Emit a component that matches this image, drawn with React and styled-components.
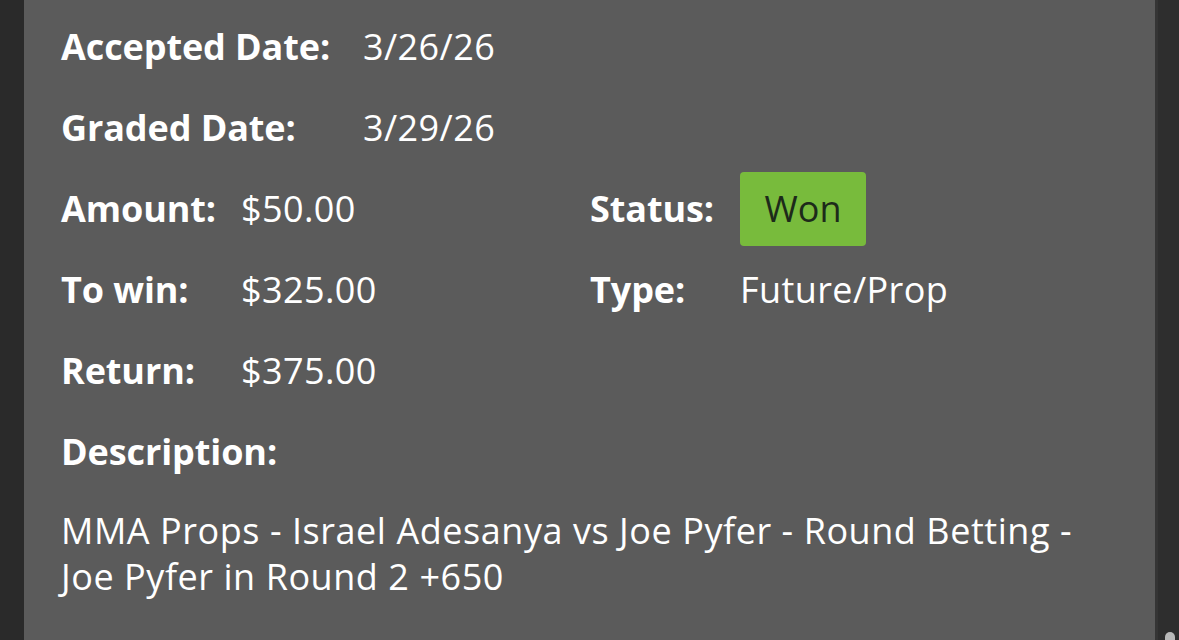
import styled, { createGlobalStyle } from 'styled-components'

const GlobalStyle = createGlobalStyle`
  html, body {
    margin: 0;
    padding: 0;
    background: #2b2b2b;
    overflow: hidden;
  }
  body {
    font-family: "Open Sans", "Liberation Sans", sans-serif;
  }
`

const Page = styled.div`
  display: flex;
  width: 1179px;
  height: 640px;
  background: #2b2b2b;
`

const Gutter = styled.div`
  width: 24px;
  flex-shrink: 0;
  background: #2a2a2a;
`

const Panel = styled.div`
  flex: 1;
  background: #5b5b5b;
  padding: 6px 0 0 37px;
  color: #fff;
  overflow: hidden;
`

const Track = styled.div`
  width: 21px;
  flex-shrink: 0;
  background: #2e2e2e;
  border-left: 3px solid #353535;
  display: flex;
  flex-direction: column;
  justify-content: flex-end;
  align-items: center;
`

const Thumb = styled.div`
  width: 10px;
  height: 8px;
  margin-left: 2px;
  border-radius: 5px 5px 0 0;
  background: #b9b9b9;
`

const Row = styled.div`
  display: flex;
  align-items: center;
  height: 81px;
`

const Pair = styled.div`
  display: flex;
  align-items: center;
  width: ${p => p.width ? `${p.width}px` : 'auto'};
`

const Label = styled.div`
  width: ${p => p.width}px;
  flex-shrink: 0;
  font-size: 36px;
  line-height: 46px;
  font-weight: 700;
  letter-spacing: -0.1px;
`

const Value = styled.div`
  font-size: 36px;
  line-height: 46px;
  font-weight: 400;
  letter-spacing: 0.4px;
`

const Badge = styled.div`
  display: inline-flex;
  align-items: center;
  justify-content: center;
  width: 126px;
  height: 74px;
  border-radius: 4px;
  background: #78bb3c;
  color: #1d2a1a;
  font-size: 36px;
  font-weight: 500;
`

const Description = styled.p`
  margin: 16px 0 0;
  font-size: 36px;
  line-height: 46px;
  letter-spacing: 0.55px;
  width: 1040px;
`

export default function App () {
  return (
    <Page>
      <GlobalStyle />
      <Gutter />
      <Panel>
        <Row>
          <Label width={302}>Accepted Date:</Label>
          <Value>3/26/26</Value>
        </Row>
        <Row>
          <Label width={302}>Graded Date:</Label>
          <Value>3/29/26</Value>
        </Row>
        <Row>
          <Pair width={529}>
            <Label width={180}>Amount:</Label>
            <Value>$50.00</Value>
          </Pair>
          <Pair>
            <Label width={150}>Status:</Label>
            <Badge>Won</Badge>
          </Pair>
        </Row>
        <Row>
          <Pair width={529}>
            <Label width={180}>To win:</Label>
            <Value>$325.00</Value>
          </Pair>
          <Pair>
            <Label width={150}>Type:</Label>
            <Value>Future/Prop</Value>
          </Pair>
        </Row>
        <Row>
          <Label width={180}>Return:</Label>
          <Value>$375.00</Value>
        </Row>
        <Row>
          <Label width={180}>Description:</Label>
        </Row>
        <Description>
          MMA Props - Israel Adesanya vs Joe Pyfer - Round Betting - Joe Pyfer in Round 2 +650
        </Description>
      </Panel>
      <Track>
        <Thumb />
      </Track>
    </Page>
  )
}
